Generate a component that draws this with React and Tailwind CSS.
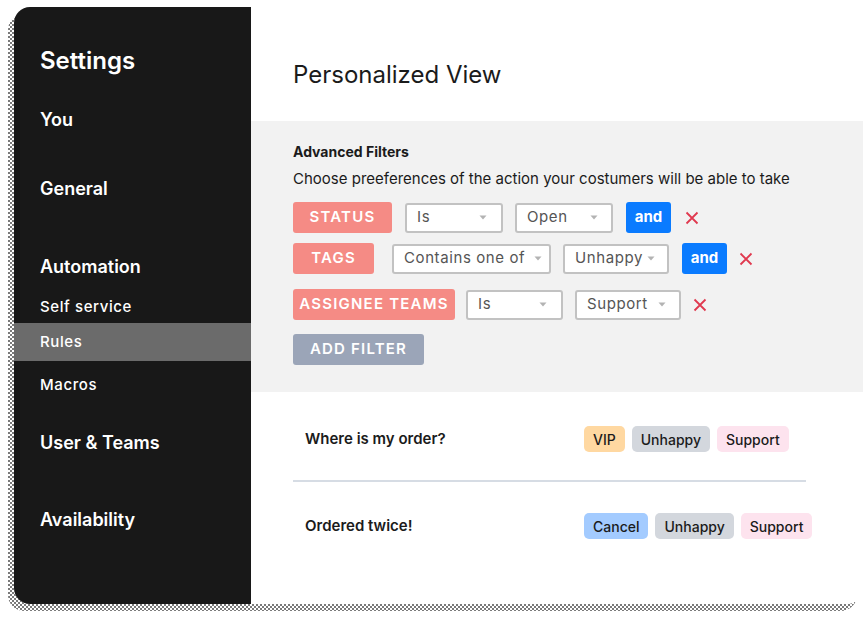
const font = { fontFamily: "Inter, 'Noto Sans', sans-serif" };

const Caret = () => (
  <svg width="8" height="5" viewBox="0 0 8 5" className="shrink-0">
    <path d="M0.5 0.5h7L4 4.5z" fill="#b3b3b3" />
  </svg>
);

const Cross = () => (
  <svg width="14" height="14" viewBox="0 0 14 14">
    <path d="M1.5 1.5l11 11M12.5 1.5l-11 11" stroke="#e0394f" strokeWidth="1.8" />
  </svg>
);

const Select = ({ label, className }) => (
  <div
    className={`flex h-[30px] items-center justify-between rounded-[3px] border-2 border-[#c2c2c2] bg-white pl-[10px] text-[15px] tracking-[0.04em] text-[#555] ${className}`}
  >
    <span>{label}</span>
    <Caret />
  </div>
);

const filters = [
  { field: "STATUS", fieldW: "w-[99px]", gap: "ml-[13px]", op: "Is", opW: "w-[98px] pr-[14px]", val: "Open", valW: "w-[98px] pr-[13px]", and: true, row: "mt-[12px]", crossGap: "ml-[14px]" },
  { field: "TAGS", fieldW: "w-[81px]", gap: "ml-[18px]", op: "Contains one of", opW: "w-[159px] pr-[7px]", val: "Unhappy", valW: "w-[106px] pr-[12px]", and: true, row: "mt-[10px]", crossGap: "ml-[12px]" },
  { field: "ASSIGNEE TEAMS", fieldW: "w-[162px]", gap: "ml-[11px]", op: "Is", opW: "w-[97px] pr-[14px]", val: "Support", valW: "w-[106px] pr-[13px]", and: false, row: "mt-[15px]", crossGap: "ml-[12px]" },
];

const tickets = [
  { title: "Where is my order?", tags: [["VIP", "bg-[#ffd8a1]"], ["Unhappy", "bg-[#d3d7dd]"], ["Support", "bg-[#fde3ee]"]] },
  { title: "Ordered twice!", tags: [["Cancel", "bg-[#a3cbff]"], ["Unhappy", "bg-[#d3d7dd]"], ["Support", "bg-[#fde3ee]"]] },
];

function Sidebar() {
  return (
    <aside className="flex w-[237px] shrink-0 flex-col bg-[#181818] pt-[38px] text-white">
      <h1 className="pl-[26px] text-[24px] font-semibold leading-8">Settings</h1>
      <div className="mt-[31px] pl-[26px] text-[18px] font-semibold leading-6">You</div>
      <div className="mt-[45px] pl-[26px] text-[18px] font-semibold leading-6">General</div>
      <div className="mt-[54px] pl-[26px] text-[18px] font-semibold leading-6">Automation</div>
      <div className="mt-[18px] pl-[26px] text-[15px] font-medium leading-5 tracking-[0.04em]">Self service</div>
      <div className="mt-[6px] flex h-[38px] items-center bg-[#6b6b6b] pl-[26px] text-[15px] font-medium tracking-[0.04em]">
        Rules
      </div>
      <div className="mt-[14px] pl-[26px] text-[15px] font-medium leading-5 tracking-[0.04em]">Macros</div>
      <div className="mt-[36px] pl-[26px] text-[18px] font-semibold leading-6">User &amp; Teams</div>
      <div className="mt-[53px] pl-[26px] text-[18px] font-semibold leading-6">Availability</div>
    </aside>
  );
}

function FilterRow({ f }) {
  return (
    <div className={`flex items-center ${f.row}`}>
      <div
        className={`flex h-[31px] items-center justify-center rounded-[3px] bg-[#f58b85] text-[15px] font-semibold tracking-[0.08em] text-white ${f.fieldW}`}
      >
        {f.field}
      </div>
      <Select label={f.op} className={`${f.opW} ${f.gap}`} />
      <Select label={f.val} className={`${f.valW} ml-[12px]`} />
      {f.and && (
        <button className="ml-[13px] flex h-[31px] w-[45px] items-center justify-center rounded-[3px] bg-[#0a7bff] text-[15px] font-bold text-white">
          and
        </button>
      )}
      <span className={`${f.crossGap} flex`}>
        <Cross />
      </span>
    </div>
  );
}

export default function App() {
  return (
    <div className="min-h-screen bg-white pl-[14px] pt-[7px]" style={font}>
      <div className="relative h-[597px] w-[849px]">
        <div className="absolute left-[-6px] top-[7px] h-full w-full rounded-[16px] bg-[image:repeating-conic-gradient(#7a7a7a_0%_25%,#ffffff_0%_50%)] bg-[length:4px_4px]" />
        <div className="relative flex h-full overflow-hidden rounded-[16px] bg-white">
          <Sidebar />
          <main className="flex flex-1 flex-col">
            <h2 className="pl-[42px] pt-[52px] text-[24px] font-normal leading-8 text-[#1b1b1b]">Personalized View</h2>

            <section className="mt-[30px] bg-[#f2f2f2] pb-[27px] pl-[42px] pt-[21px]">
              <h3 className="text-[14px] font-bold leading-5 text-[#1b1b1b]">Advanced Filters</h3>
              <p className="mt-[6px] text-[15px] leading-[22px] text-[#1b1b1b]">
                Choose preeferences of the action your costumers will be able to take
              </p>
              {filters.map((f) => (
                <FilterRow key={f.field} f={f} />
              ))}
              <button className="mt-[14px] flex h-[31px] w-[131px] items-center justify-center rounded-[3px] bg-[#9ba5b8] text-[15px] font-semibold tracking-[0.08em] text-white">
                ADD FILTER
              </button>
            </section>

            <div className="pl-[42px] pt-[34px]">
              {tickets.map((t, i) => (
                <div key={t.title}>
                  {i > 0 && <div className="mb-[31px] mt-[28px] h-[2px] w-[513px] bg-[#d6dce4]" />}
                  <div className="flex items-center pl-[12px]">
                    <div className="w-[279px] shrink-0 text-[15px] font-semibold text-[#1b1b1b]">{t.title}</div>
                    <div className="flex shrink-0 gap-[7px]">
                      {t.tags.map(([label, bg]) => (
                        <span
                          key={label}
                          className={`flex h-[26px] items-center rounded-[5px] px-[9px] text-[14px] font-medium text-[#1b1b1b] ${bg}`}
                        >
                          {label}
                        </span>
                      ))}
                    </div>
                  </div>
                </div>
              ))}
            </div>
          </main>
        </div>
      </div>
    </div>
  );
}
